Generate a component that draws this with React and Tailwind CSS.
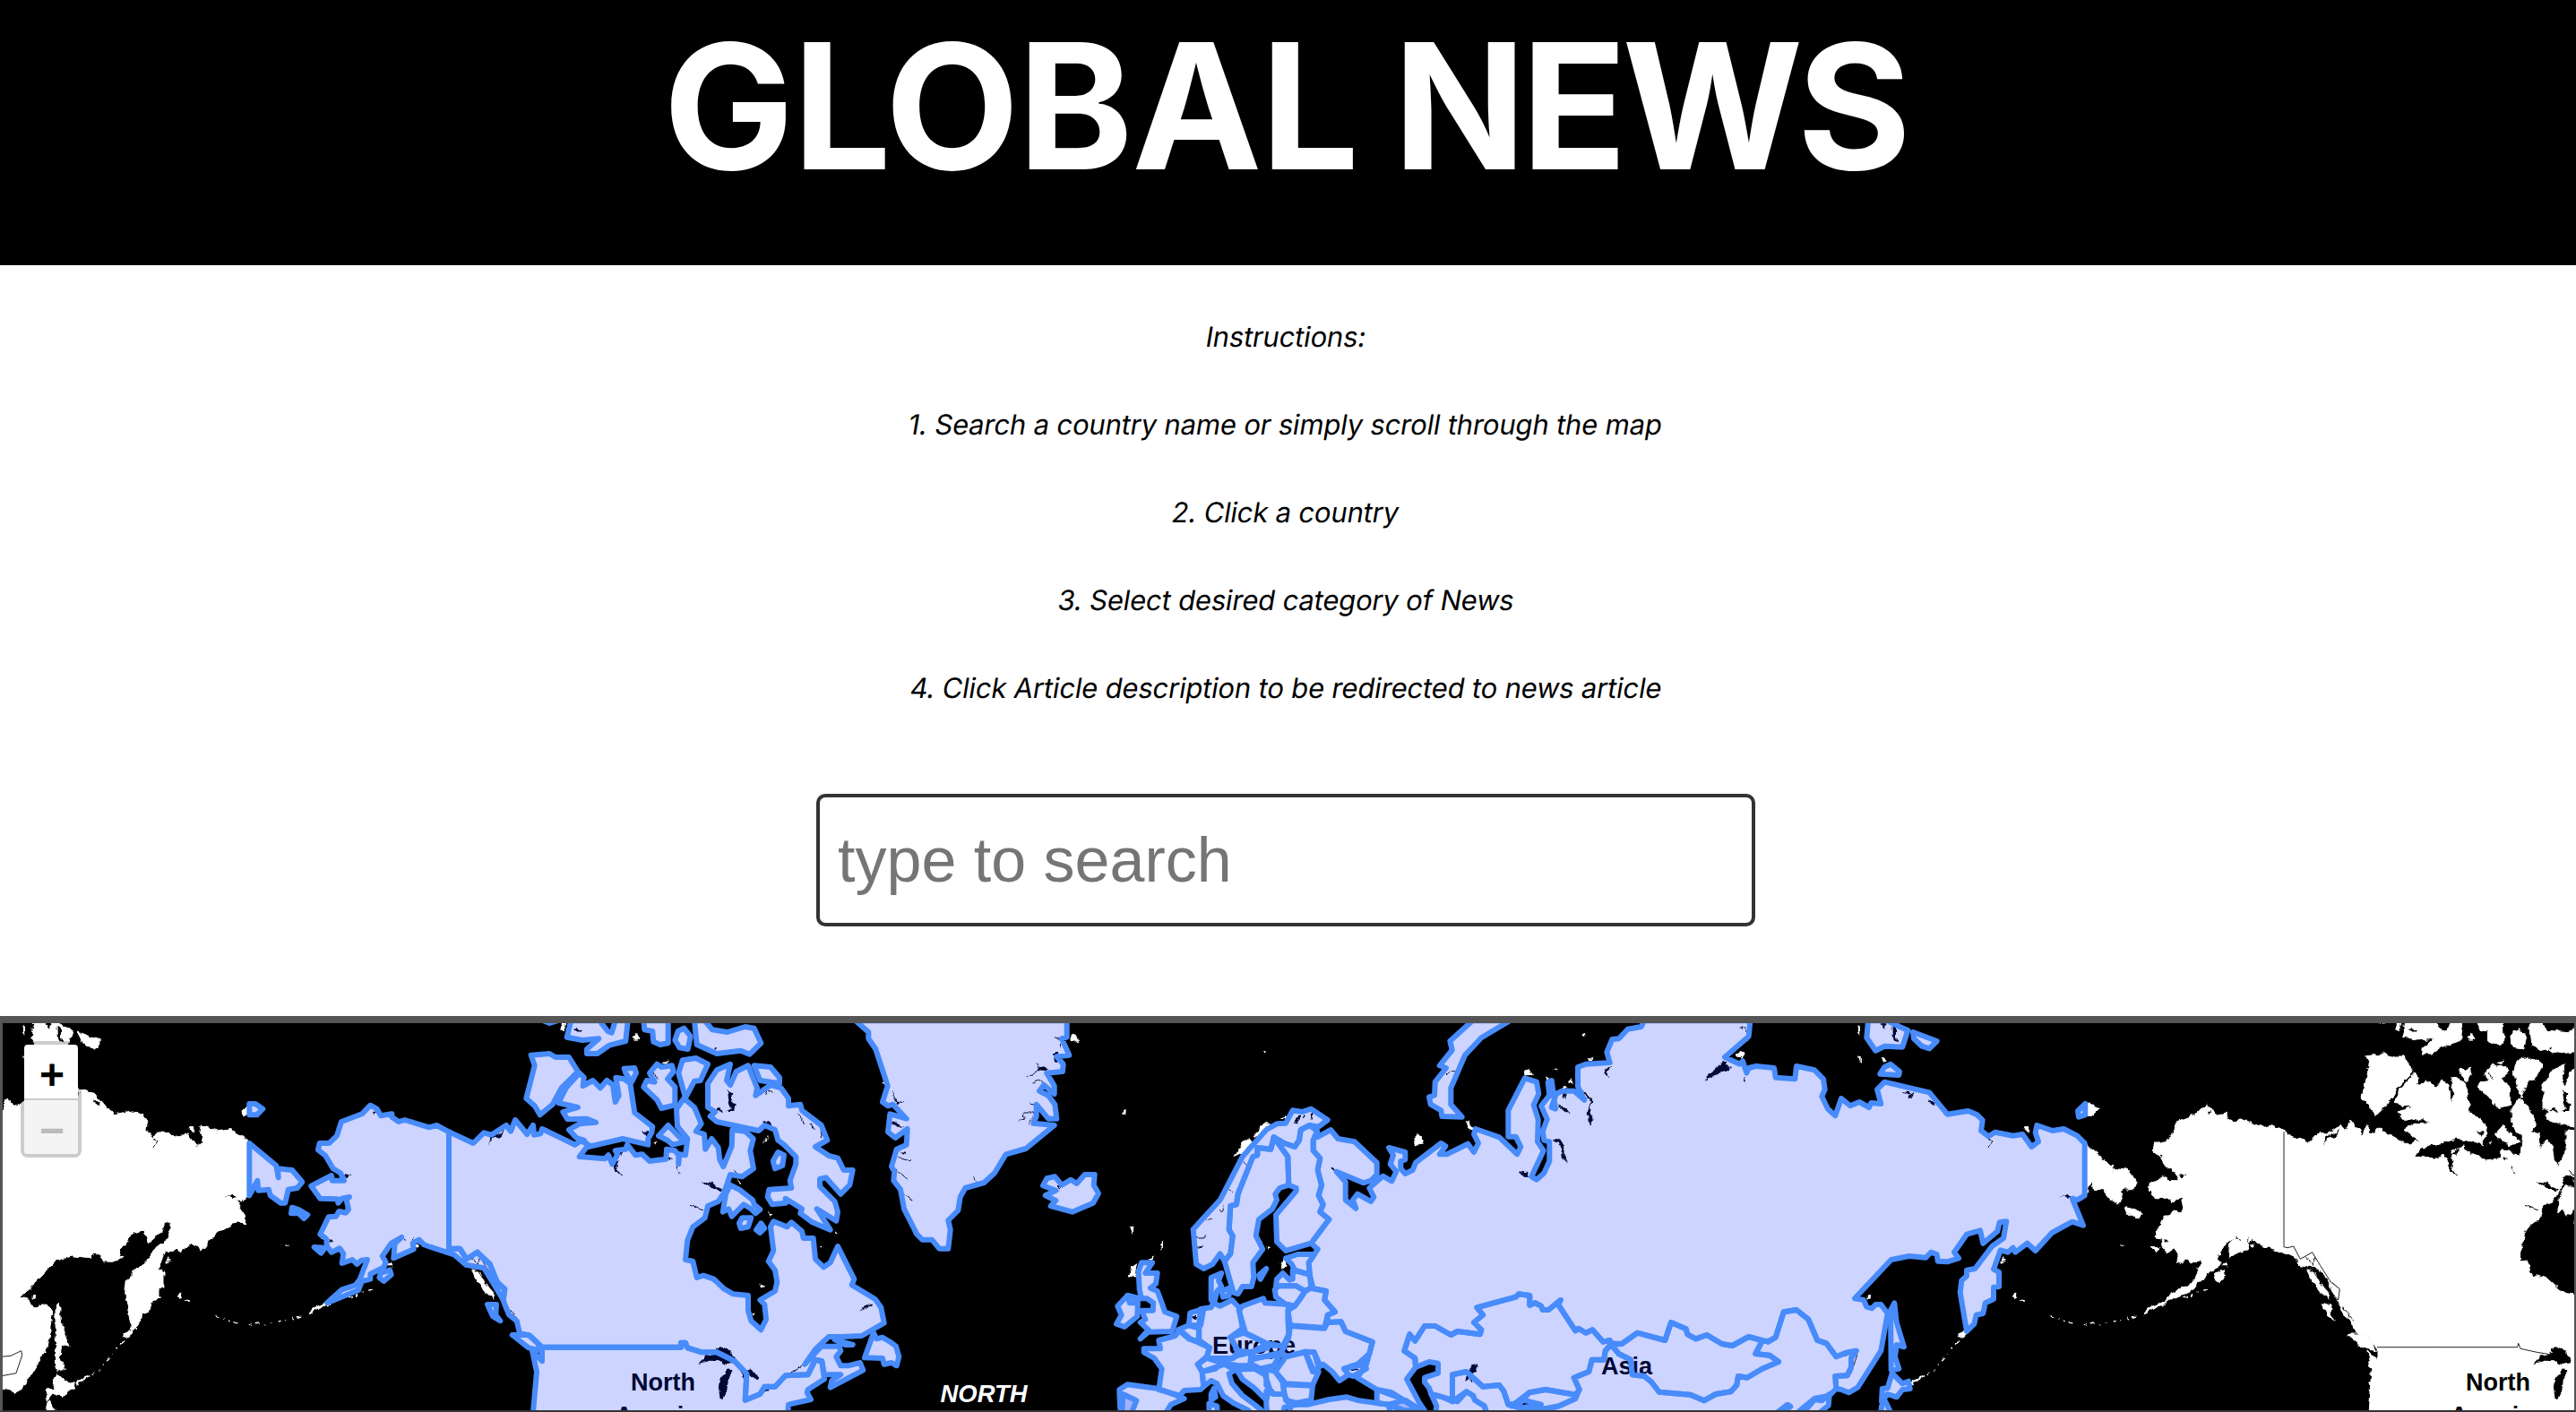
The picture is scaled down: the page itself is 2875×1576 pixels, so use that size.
import React from "react";

// Each trace is a list of [originX, "x,y x,y ..."] runs, stored at three units per pixel.
const pts = (...runs) =>
  runs
    .map(([ox, s]) =>
      s
        .trim()
        .split(/\s+/)
        .map((p) => {
          const [x, y] = p.split(",").map(Number);
          return (ox + x / 3).toFixed(1) + "," + (1126 + y / 3).toFixed(1);
        })
        .join(" ")
    )
    .join(" ");

const A = 0, B = 480, C = 940, D = 1200, E = 1540, F = 1960;

const finBorderUp = "790,785 850,705 820,680 830,655 815,625 825,590 812,540 820,500 797,475 797,440 810,410";
const rusKazWestward =
  "775,1120 770,1110 748,1115 712,1075 690,1085 665,1070 655,1078 597,990 605,975 565,1008 545,1008 540,995 520,985 502,992 502,960 465,955 455,965 325,1000 345,1025 315,1050 340,1075 335,1090 260,1080 238,1092 185,1062 150,1062 118,1112 100,1090 82,1145 118,1170 120,1200";
const usCanWestward =
  "1312,1180 1290,1175 1265,1225 1190,1228 1155,1265 1120,1265 1105,1290 1055,1310 1060,1222 1020,1180 960,1150 910,1150 862,1135 855,1118 840,1118 840,1133 375,1133";

const countries = [
  // Alaska
  pts([A, "1460,390 1437,397 1355,372 1335,378 1312,362 1312,352 1275,358 1262,335 1240,323 1212,352 1143,378 1128,425 1102,450 1070,450 1065,472 1090,492 1115,535 1140,550 1152,575 1112,575 1110,558 1042,593 1072,635 1130,637 1132,650 1145,635 1170,630 1160,640 1167,672 1158,683 1135,678 1125,695 1100,697 1072,755 1092,770 1095,795 1110,815 1137,802 1150,820 1145,852 1180,840 1195,855 1210,842 1230,840 1205,905 1190,925 1145,940 1095,985 1200,942 1212,912 1240,905 1240,888 1260,878 1285,865 1292,848 1280,828 1310,785 1345,765 1322,785 1318,835 1385,805 1382,785 1403,773 1420,790"], [B, "0,797 80,823 120,857 180,868 215,925 245,975 250,938 225,920 200,855 158,815 122,838 100,803 63,803 63,412 22,390"]),
  // Canada
  pts([B, "63,412 145,450 180,415 205,422 255,390 270,410 285,372 325,420 345,390 348,422 370,418 375,402 485,455 505,442 530,455 500,495 585,502 597,490 610,520 628,488 620,475 655,470 660,455 688,490 710,487 735,510 790,503 792,470 820,475 832,490 832,520 835,487 855,490 862,435 828,393 825,335 850,300 885,330 908,385 890,410 918,420 922,470 943,435 965,465 970,505 982,528 1010,460 1012,405 1055,410 1082,435 1072,475 1083,535 1045,562 1005,555 985,615 965,645 930,660 920,700 880,730 862,775 855,840 880,845 893,900 915,893 950,905 985,938 1015,955 1065,960 1065,1010 1075,1045 1108,1075 1125,1040 1120,990 1105,975 1155,945 1162,915 1155,875 1133,845 1150,810 1140,730 1150,712 1195,730 1210,715 1245,745 1250,768 1283,768 1290,838 1318,865 1340,850 1365,795 1420,905 1412,925"], [C, "110,972 130,1000 140,1052 65,1095 0,1098"], [B, "1335,1098 1290,1140 1255,1190 1310,1130 1370,1130 1375,1145 1360,1165 1375,1195 1400,1195 1440,1185 1450,1210 1340,1268 1345,1245 1375,1225 1320,1225"], [B, usCanWestward], [B, "335,1095 300,1085 290,1045 265,1025 250,990 245,975 250,938 225,915 200,855 158,815 122,838 100,803 63,803"]),
  // United States
  pts([B, usCanWestward], [B, "375,1180 342,1145 357,1215 345,1350 345,1400 1195,1400 1200,1325 1275,1308 1262,1285 1265,1275 1320,1240"]),
  // Arctic archipelago
  pts([B, "338,155 400,150 420,162 465,162 495,210 440,265 410,320 368,355 350,325 322,300 350,190"]),
  pts([B, "500,215 515,230 512,258 545,240 570,265 592,240 612,255 620,312 632,290 622,230 650,235 670,250 685,348 745,395 742,415 730,435 730,455 645,435 530,462 515,440 490,432 465,405 500,385 555,380 525,368 460,370 445,345 495,330 430,315 455,265"]),
  pts([B, "650,200 685,198 690,215 675,245 655,215"]),
  pts([B, "472,40 458,95 510,105 565,100 525,135 525,150 560,150 600,122 655,108 662,40 620,40 608,80 595,75 575,50 570,40"]),
  pts([B, "715,40 718,70 745,75 748,110 770,120 797,115 797,40"]),
  pts([B, "850,65 872,92 863,135 835,130 820,105 830,75"]),
  pts([B, "885,40 893,120 960,150 1040,140 1070,152 1108,115 1085,65 1055,60 995,78 945,70 920,40"]),
  pts([B, "380,40 400,48 425,40"]),
  pts([B, "760,185 775,195 810,190 815,210 795,235 820,262 820,322 775,333 760,305 715,262 725,240 752,245 735,215"]),
  pts([B, "845,172 890,165 930,185 905,240 885,242 855,298 832,215"]),
  pts([B, "797,390 835,430 855,445 812,455 795,440 765,425"]),
  pts([B, "1005,185 960,205 930,250 930,330 955,345 938,360 960,378 1100,408 1120,390 1155,405 1165,440 1185,455 1225,495 1225,520 1205,575 1210,600 1135,605 1130,630 1145,655 1190,650 1190,635 1245,670 1240,685 1280,715 1340,740 1295,670 1360,710 1365,680 1355,645 1305,595 1305,570 1325,565 1375,620 1405,590 1415,540 1385,540 1365,500 1335,492 1290,462 1330,440 1310,390 1245,340 1240,320 1200,325 1200,300 1175,265 1140,255 1090,290 1095,265 1065,190 1025,210 1005,255 993,240"]),
  pts([B, "1085,190 1140,195 1170,230 1170,250 1105,240"]),
  pts([B, "1005,590 1035,605 1080,640 1085,655 1105,672 1090,685 1075,670 1050,655 1030,675 1010,695 1000,670 980,680 990,620"]),
  pts([B, "1045,700 1075,700 1065,730 1040,735 1035,718"]),
  pts([B, "1108,718 1120,735 1105,750 1092,740"]),
  pts([B, "1165,480 1185,490 1180,525 1155,535 1148,510"]),
  pts([B, "275,1092 330,1092 360,1120 370,1145 330,1135"]),
  pts([B, "192,990 222,990 220,1025 235,1045 210,1030"]),
  pts([B, "1355,1108 1415,1125 1390,1125"]),
  pts([C, "105,1085 115,1105 135,1100 160,1115 180,1130 190,1165 182,1195 165,1185 140,1190 135,1170 75,1168"]),
  // Greenland, Iceland
  pts([C, "45,40 88,78 88,100 112,135 152,258 135,312 153,325 170,320 215,368 160,352 153,412 178,432 218,402 215,455 182,470 165,528 175,545 172,575 195,605 207,670 250,755 268,773 300,773 325,803 355,803 362,740 355,708 388,675 395,630 412,600 475,582 510,550 548,487 615,468 710,390 640,383 650,360 650,320 690,368 718,368 712,320 690,290 660,275 675,255 710,285 710,258 685,215 738,210 740,185 718,160 760,155 735,100 752,95 752,40"]),
  pts([C, "672,592 685,568 712,562 735,590 765,572 785,585 812,555 845,555 842,590 858,618 840,650 770,680 698,660 715,642 680,625 715,608"]),
  // British Isles
  pts([D, "222,850 258,850 235,885 275,885 270,920 252,935 275,945 290,985 300,1015 340,1030 325,1080 245,1082 218,1105 245,1075 218,1050 235,1040 222,1010 260,1010 262,985 240,970 222,970 215,940 212,880"]),
  pts([D, "175,960 210,970 208,1030 165,1065 138,1055 155,1025 142,995"]),
  pts([D, "175,960 182,985 208,985 210,968"]),
  // Scandinavia
  pts([D, "395,738 485,640 560,495 640,405 675,385 705,383 728,340 760,345 790,335 845,372 815,395 785,390 755,405 750,440 735,462 700,450 665,430 655,470 610,465 610,490 595,495 545,620 540,655 520,660 515,740 527,760 520,820 500,845 485,820 460,855 430,870 405,855"]),
  pts([D, "500,845 520,820 527,760 515,740 520,660 540,655 545,620 595,495 610,490 610,465 655,470 665,430 712,495 715,590 685,600 670,620 675,640 660,670 615,705 605,760 628,805 595,850 598,900 590,930 560,930 545,955 530,950"]),
  pts([D, "665,430 700,450 735,462 750,440 755,405 785,390"], [D, finBorderUp.split(" ").reverse().join(" ")], [D, "705,810 675,780 672,690 740,610 740,600 715,590 712,495"]),
  pts([D, "640,870 620,905 615,892"]),
  pts([D, "455,900 490,885 480,910 490,930 475,945 465,985 455,975"]),
  pts([D, "490,945 515,935 515,960 495,965"]),
  // Baltics and eastern Europe
  pts([D, "705,835 745,822 800,822 782,850 785,890 735,875 725,855"]),
  pts([D, "675,905 695,885 718,908 728,905 728,875 785,890 795,930 770,945 740,928 672,928"]),
  pts([D, "668,940 680,928 740,928 760,940 770,945 750,975 735,995 705,990 672,965"]),
  pts([D, "790,935 840,945 835,975 870,1015 845,1025 835,1068 720,1060 712,1010 735,995 750,975 770,945"]),
  pts([D, "560,995 630,970 635,985 715,990 712,1030 715,1090 695,1130 640,1120 570,1085 548,1010"]),
  pts([D, "420,1005 455,1000 462,985 485,995 525,975 548,1000 560,1070 520,1100 545,1145 530,1170 440,1170 450,1135 415,1110 415,1060"]),
  pts([D, "385,1018 430,1005 420,1060 380,1060"]),
  pts([D, "345,1075 380,1060 415,1070 412,1115 380,1105"]),
  pts([D, "350,1075 385,1105 450,1135 440,1165 410,1190 425,1215 430,1265 420,1275 365,1278 350,1295 280,1275 290,1205 265,1170 230,1150 230,1138 285,1138 280,1110 335,1095"]),
  pts([D, "148,1275 175,1258 280,1272 365,1305 320,1325 305,1350 280,1400 160,1400 150,1330"]),
  pts([D, "160,1290 205,1312 190,1350 185,1390 155,1390"]),
  pts([D, "410,1190 440,1170 490,1185 470,1205 425,1215"]),
  pts([D, "425,1215 500,1190 535,1210 515,1222 525,1255 560,1295 600,1325 625,1345 610,1380 580,1345 530,1320 495,1295 475,1255 455,1245 430,1265"]),
  pts([D, "490,1185 545,1160 590,1150 585,1195 545,1195"]),
  pts([D, "520,1100 565,1085 620,1110 645,1135 590,1150 545,1145"]),
  pts([D, "640,1125 700,1130 685,1160 600,1168 590,1150"]),
  pts([D, "590,1175 690,1150 665,1195 620,1205 590,1190"]),
  pts([D, "705,1165 770,1150 795,1215 815,1215 795,1260 705,1255 670,1215"]),
  pts([D, "770,1148 800,1150 820,1195 800,1215"]),
  pts([D, "695,1258 795,1262 790,1310 740,1320 705,1310"]),
  pts([D, "640,1205 670,1215 695,1250 700,1290 665,1290 640,1260"]),
  pts([D, "540,1208 600,1205 635,1225 650,1270 640,1310 600,1270 560,1240"]),
  pts([D, "640,1280 665,1290 700,1290 710,1315 740,1325 700,1335 690,1390 650,1390 640,1330"]),
  pts([D, "465,1270 470,1300 455,1310 455,1290"]),
  pts([D, "448,1322 475,1330 478,1400 450,1400"]),
  pts([D, "720,1325 780,1325 850,1308 910,1300 950,1312 1010,1320 1050,1325 1100,1345 1120,1400 720,1400"]),
  pts([D, "1010,1275 1060,1285 1130,1330 1150,1345 1100,1345 1050,1325 1010,1320"]),
  pts([D, "1050,1325 1105,1310 1160,1345 1150,1400 1060,1400"]),
  pts([D, "720,1062 835,1070 845,1050 890,1048 905,1080 995,1115 985,1155 945,1190 900,1205 915,1225 885,1245 860,1215 830,1190 815,1200 800,1150 770,1148 705,1165 690,1150 715,1100"]),
  pts([D, "900,1205 970,1190 975,1205 930,1230 915,1225"]),
  // Russia
  pts([D, "810,430 855,405 880,435 935,445 1010,515 1010,555 990,575 965,583 875,545 905,580 905,640 940,668 930,640 945,620 990,645 1000,630 985,600 1030,560 1060,577 1075,545 1055,520 1065,490 1050,465 1105,480 1105,505 1090,510 1090,535 1105,552 1130,540 1140,515 1225,450 1240,460 1220,487 1245,487 1315,452 1335,480 1350,450 1335,420 1340,402 1420,430"], [E, "460,487 472,462 455,428 430,428 430,340 485,232 525,245 532,285 515,322 530,370 528,445 548,475 508,562 525,572 550,550 568,510 568,445 550,440 545,410 560,370 540,325 568,290 563,245 575,240 588,335 575,330 590,285 610,275 650,275 685,305 663,260 663,195 690,185 770,180 760,145 778,102 800,100 830,68 875,60 885,40 1240,40 1235,92 1155,162 1205,185 1215,175 1228,215 1235,198 1260,192 1320,198 1325,230 1390,235 1395,192"], [F, "195,205 225,235 230,270 220,293 240,335 265,358 285,300 315,325 345,312 378,330 385,315 418,318 405,270 430,245 580,280 640,353 710,342 740,355 758,373 753,408 778,427 800,413 860,425 892,420 922,462 945,445 935,415 940,390 992,408 1030,402 1075,425 1100,450 1100,625 1075,640 1058,635 1095,725 1058,713 990,750 935,810 908,785 868,815 860,800 842,815 818,808 795,872 813,882 813,930 795,932 795,972 767,985 760,1020 737,1025 730,1055 705,1080 683,950 688,910 705,895 705,875 733,870 790,795 828,768 838,712 815,715 808,745 760,785 750,742 705,755 663,815 678,835 640,847 608,845 605,822 585,815 568,833 512,828 452,840 330,970 360,975 370,998 388,1003 400,990 418,990 440,1020 418,1145 340,1268 310,1285 285,1275 268,1272 265,1230 305,1228 318,1200 318,1170 335,1145 300,1152 268,1165 235,1120 205,1110 175,1040 135,1008 92,1015 65,1100 40,1115"], [E, "1235,1098 1180,1128 1145,1122 1095,1092 1058,1105 1030,1090 1025,1072 975,1050 955,1110 862,1085 810,1122"], [E, rusKazWestward], [E, "90,1240 130,1315 150,1345"], [D, "1130,1330 1080,1300 1010,1275 945,1235 975,1190 985,1155 995,1115 905,1080 890,1048 845,1050 845,1025 870,1015 835,975 840,945 790,935 785,890 782,850 812,805"], [D, finBorderUp]),
  pts([E, "310,40 235,108 242,138 200,190 222,198 185,245 183,290 165,295 170,320 205,340 208,360 275,362 238,320 238,265 285,155 340,97 435,40"]),
  pts([F, "375,40 370,97 400,140 430,125 490,128 508,72 480,60 440,40"]),
  pts([F, "525,78 605,108 580,133 555,125 528,100"]),
  pts([F, "450,185 480,210 478,222 415,218 430,195"]),
  pts([F, "1102,318 1102,355 1080,362 1077,342"]),
  pts([F, "463,985 470,1050 495,1132 470,1125 465,1165 478,1205 452,1210 450,1010"]),
  pts([F, "455,1220 490,1255 510,1247 515,1272 490,1275 470,1300 440,1290 420,1315 422,1272 440,1270"]),
  pts([F, "430,1310 450,1350 440,1400 415,1400 420,1330"]),
  // Central and east Asia
  pts([E, rusKazWestward], [E, "165,1182 195,1187 195,1220 150,1235 150,1250 165,1270 172,1290 210,1300 243,1315 243,1225 290,1215 345,1265 400,1260 415,1280 430,1325 470,1320 500,1285 555,1275 655,1292 668,1275 650,1235 700,1215 710,1175 750,1175 755,1145"]),
  pts([E, "243,1315 243,1225 290,1215 345,1265 400,1260 415,1280 430,1325 480,1340 470,1400 370,1400 350,1330 318,1310 312,1295 290,1282"]),
  pts([E, "172,1290 210,1300 260,1315 290,1282 312,1295 318,1310 350,1330 375,1400 180,1400 190,1330"]),
  pts([E, "440,1330 500,1285 555,1275 655,1292 655,1305 600,1330 545,1345 480,1335 540,1325 480,1310"]),
  pts([E, "480,1335 545,1340 600,1330 655,1305 668,1275 650,1235 700,1215 710,1175 750,1175 755,1145 775,1125 800,1155 840,1175 845,1225 885,1230 910,1250 935,1283 1040,1292 1085,1312 1125,1290 1175,1282 1195,1260 1200,1230 1230,1235 1280,1205 1335,1182 1305,1160 1258,1155 1280,1112 1300,1112"], [F, "40,1115 65,1100 92,1015 135,1008 175,1040 205,1110 235,1120 268,1165 300,1152 335,1145 318,1170 318,1200 305,1228 265,1230 268,1272 245,1295 195,1305 140,1350 90,1390 70,1365 115,1332 105,1325 60,1360 20,1400"], [E, "480,1400"]),
  pts([E, "775,1125 810,1122 862,1085 955,1110 975,1050 1025,1072 1030,1090 1058,1105 1095,1092 1145,1122 1180,1128 1235,1098 1280,1112 1258,1155 1305,1160 1335,1182 1280,1205 1230,1235 1200,1230 1195,1260 1175,1282 1125,1290 1085,1312 1040,1292 935,1283 910,1250 885,1230 845,1225 840,1175 800,1155"]),
  pts([F, "195,1308 220,1312 245,1290 242,1328 215,1350 200,1400 120,1400"]),
  // Bering Sea side
  pts([A, "835,318 855,318 880,335 860,355 835,355"]),
  pts([A, "835,450 925,525 932,565 930,535 978,540 1012,580 995,600 965,605 955,650 940,650 905,625 900,605 865,608 862,575 835,625"]),
  pts([A, "978,665 1000,672 1030,690 1018,702 1000,685 975,685"]),
  pts([A, "1275,885 1305,875 1310,890 1285,912 1270,900"]),
  pts([A, "1052,798 1088,800 1075,818"]),
];

// Coastal dots and slivers of land drawn on the base tiles only.
const islets = [
  pts([B, "432,68 445,50 460,50 450,75"]),
  pts([B, "680,90 690,83 698,97 688,108 680,100"]),
  pts([B, "775,182 800,168 795,185"]),
  pts([B, "138,872 170,885 195,930 215,950 208,975 190,950 170,925 150,900"]),
  pts([B, "1115,450 1130,425 1125,440"]),
  pts([B, "1025,575 1045,590 1035,592"]),
  pts([B, "1105,920 1125,925 1112,938"]),
  pts([B, "1075,1018 1088,1022 1083,1030"]),
  pts([B, "1130,682 1145,685 1138,692"]),
  pts([B, "1355,742 1365,750 1358,755"]),
  pts([B, "1302,788 1310,792 1305,798"]),
  pts([B, "750,445 760,440 758,455"]),
  pts([C, "765,92 780,85 792,105 772,112"]),
  pts([C, "1410,145 1418,143 1416,152"]),
  pts([C, "935,350 952,338 953,345 940,354"]),
  pts([C, "130,250 142,246 145,262"]),
  pts([C, "962,730 980,728 972,752"]),
  pts([C, "1062,790 1075,778 1068,808"]),
  pts([C, "1030,832 1048,830 1036,842"]),
  pts([C, "962,895 970,865 985,855 978,880 988,900"]),
  pts([C, "1308,497 1340,450 1362,430 1375,445 1345,480 1325,488"]),
  pts([C, "1375,430 1410,385 1435,385 1400,425"]),
  pts([C, "1465,365 1485,358 1490,368"]),
  pts([C, "1463,855 1480,840 1490,862 1470,870"]),
  pts([C, "1423,795 1434,798 1428,806"]),
  pts([E, "112,435 125,420 145,437 140,455 120,458 112,450"]),
  pts([E, "287,375 300,378 318,408 298,400"]),
  pts([E, "483,210 500,205 510,222 485,228"]),
  pts([E, "632,240 640,232 648,248 636,250"]),
  pts([E, "572,208 588,202 598,208 588,206"]),
  pts([E, "695,166 712,166 710,171 698,171"]),
  pts([E, "680,82 690,78 691,90 683,93"]),
  pts([E, "600,268 618,258 628,268"]),
  pts([E, "555,230 567,232 560,240"]),
  pts([E, "1190,155 1205,142 1222,152 1215,165 1200,165"]),
  pts([F, "340,60 350,58 352,80 343,85"]),
  pts([F, "338,160 345,162 354,180 348,178"]),
  pts([F, "420,162 432,157 438,175 425,180"]),
  pts([F, "895,402 908,396 920,408 908,415"]),
  pts([F, "1100,315 1130,320 1142,335 1130,345 1100,345"]),
  pts([F, "818,852 830,835 840,842"]),
  pts([F, "370,962 382,960 385,972 375,970"]),
  pts([A, "1290,862 1310,850 1315,862"]),
  pts([A, "1388,790 1408,790 1398,805"]),
];

const arcs = [
  pts([A, "1100,985 1065,1000 1030,1025"]),
  pts([F, "705,1080 680,1102"]),
  pts([F, "560,1230 520,1255"]),
  pts([A, "600,955 608,970"]),
];
const dashedArcs = [
  pts([A, "1010,1030 940,1048 900,1055 865,1057 825,1062 795,1052 735,1035 712,1025"]),
  pts([A, "625,972 635,977"]),
  pts([A, "955,788 968,793"]),
  pts([F, "675,1112 635,1165 600,1205 560,1230 520,1258"]),
  pts([A, "1165,965 1190,960 1252,940"]),
];

// Inland water and fjords.
const lakes = [
  pts([B, "898,1188 920,1165 960,1150 955,1138 975,1132 1000,1140 1022,1165 1020,1185 990,1192 970,1180 935,1178"]),
  pts([B, "970,1280 975,1235 990,1212 1018,1208 1000,1235 992,1290 985,1308 974,1305"]),
  pts([B, "1040,1210 1070,1205 1090,1220 1105,1240 1085,1238 1068,1225 1070,1250 1055,1245"]),
  pts([B, "1105,1290 1155,1265 1120,1262"]),
  pts([B, "910,580 940,585 985,605 970,610 945,602"]),
  pts([B, "995,270 1012,285 1008,305 1022,315 1018,345 990,345 1010,335 1000,310"]),
  pts([B, "1115,370 1140,385 1150,405 1125,395"]),
  pts([B, "955,345 968,330 978,347"]),
  pts([B, "605,480 630,510 628,535 638,560 622,545 615,515"]),
  pts([B, "628,485 650,470 655,478 640,488"]),
  pts([B, "195,455 205,430 250,405 235,425 215,432"]),
  pts([B, "800,495 810,500 805,508 798,505"]),
  pts([B, "1440,1012 1460,995 1485,985 1465,1002"]),
  pts([B, "480,68 505,65 495,75"]),
  pts([B, "708,412 730,408 722,425"]),
  pts([B, "945,130 960,125 955,138"]),
  pts([C, "660,205 672,192 685,208"]),
  pts([C, "708,150 720,145 720,175 710,172"]),
  pts([C, "165,380 180,380 205,400 185,395"]),
  pts([C, "172,305 190,315 182,322"]),
  pts([C, "190,480 212,482 210,488"]),
  pts([C, "722,592 732,598 725,606"]),
  pts([C, "1175,1035 1190,1025 1185,1042"]),
  pts([D, "735,385 745,355 755,358 742,385"]),
  pts([D, "763,370 770,353 775,358"]),
  pts([D, "788,355 797,352 793,375"]),
  pts([D, "855,530 870,535 872,548"]),
  pts([D, "1330,1195 1350,1190 1340,1215 1325,1222 1330,1250 1318,1235 1302,1245 1310,1230"]),
  pts([D, "915,1205 945,1200 945,1212 925,1215"]),
  pts([E, "1087,247 1105,215 1125,200 1148,175 1165,178 1160,190 1180,190 1165,207 1120,220 1098,235"]),
  pts([E, "680,275 695,285 715,310 705,345 717,375 705,392 695,350 708,315"]),
  pts([E, "575,437 598,435 615,455 618,495 632,512 612,508 610,480 598,450"]),
  pts([E, "752,205 780,188 762,210 768,226 756,218"]),
  pts([E, "595,325 622,332 635,348 620,345"]),
  pts([E, "610,288 622,288 624,298 612,300"]),
  pts([E, "470,547 492,545 498,562 480,556"]),
  pts([F, "490,275 510,280 520,290 535,280 520,305 505,303 515,292"]),
  pts([F, "572,308 590,305 602,315 598,328"]),
  pts([F, "1010,632 1045,620 1055,630 1042,635 1030,628"]),
  pts([F, "455,65 465,63 465,90 480,112 465,108 455,90"]),
  pts([F, "415,50 433,50 433,68"]),
  pts([A, "1150,555 1175,558 1162,565"]),
  pts([A, "1245,345 1258,342 1250,355"]),
  pts([A, "1098,775 1118,778 1105,785"]),
];

const creeks = [
  pts([B, "870,658 915,675"]), pts([B, "1018,538 1040,560"]), pts([B, "828,530 838,550"]),
  pts([B, "1235,350 1250,385"]), pts([B, "1275,385 1285,405"]), pts([B, "1305,410 1310,430"]),
  pts([B, "750,215 760,235"]), pts([B, "1120,290 1130,270 1145,280"]), pts([B, "135,830 165,860 160,835"]),
  pts([B, "260,995 285,1030 300,1045"]), pts([B, "1205,1220 1260,1185"]),
  pts([C, "620,228 640,218 665,205 655,185"]), pts([C, "637,250 665,238 670,248"]), pts([C, "625,315 650,320"]),
  pts([C, "595,373 610,370 607,348 640,348 630,385"]), pts([C, "170,275 180,310 205,315"]),
  pts([C, "180,540 215,570"]), pts([C, "190,500 225,510"]), pts([C, "210,620 235,640"]), pts([C, "440,565 450,590"]),
  pts([C, "712,100 735,110 732,130"]),
  pts([D, "405,765 435,765"]), pts([D, "405,800 425,795"]), pts([D, "480,670 495,680 502,658"]),
  pts([D, "435,705 455,700"]), pts([D, "560,510 575,525"]), pts([D, "510,605 525,612"]),
  pts([E, "222,215 240,210 268,217"]), pts([E, "1225,225 1222,250"]), pts([E, "1210,55 1225,75"]),
  pts([F, "780,430 785,450 776,467"]), pts([A, "1345,760 1350,770 1362,775"]), pts([A, "1380,768 1385,785"]),
];

const borders = [
  pts([B, "63,412 63,797 75,800 95,795 118,838 158,815 185,860 220,915 250,938 245,975 230,960"]),
  pts([B, "375,1133 845,1133 848,1120 855,1138 910,1150 960,1158"]),
  pts([F, "268,1165 300,1162 335,1145 338,1160 318,1220 265,1230 268,1272"]),
  pts([B, "150,860 175,900 200,930 220,960"]),
];

function Poly({ items }) {
  return items.map((p, i) => <polygon key={i} points={p} />);
}
function Lines({ items }) {
  return items.map((p, i) => <polyline key={i} points={p} />);
}

function Tile() {
  return (
    <>
      <g filter="url(#coast)">
        <g fill="#fff" stroke="#fff" strokeWidth="1"><Poly items={countries} /></g>
        <g fill="#fff"><Poly items={islets} /></g>
        <g fill="none" stroke="#fff" strokeWidth="3"><Lines items={arcs} /></g>
        <g fill="none" stroke="#fff" strokeWidth="1.4" strokeDasharray="5 4 2 7 1 5"><Lines items={dashedArcs} /></g>
        <g fill="#000"><Poly items={lakes} /></g>
        <g fill="none" stroke="#000" strokeWidth="1"><Lines items={creeks} /></g>
      </g>
      <g fill="none" stroke="#222" strokeWidth="1"><Lines items={borders} /></g>
      <g fontFamily="Liberation Sans, Arial, sans-serif" fontWeight="700" fontSize="27" textAnchor="middle" fill="#000">
        <text x="740" y="1551.5">North</text>
        <text x="740" y="1589">America</text>
        <text x="1399.5" y="1511">Europe</text>
        <text x="1815.5" y="1533.5">Asia</text>
        <text x="1098" y="1565" fill="#fff" fontSize="27.4" fontStyle="italic">NORTH</text>
      </g>
    </>
  );
}

function WorldMap() {
  return (
    <svg className="block h-full w-full" viewBox="3 1142 2870 432" preserveAspectRatio="xMinYMin slice">
      <defs>
        <filter id="coast" filterUnits="userSpaceOnUse" x="-100" y="1120" width="2600" height="480" colorInterpolationFilters="sRGB">
          <feTurbulence type="fractalNoise" baseFrequency="0.11" numOctaves="3" seed="4" />
          <feDisplacementMap in="SourceGraphic" scale="7" xChannelSelector="R" yChannelSelector="G" />
        </filter>
        <g id="tile"><Tile /></g>
      </defs>
      <rect x="0" y="1126" width="2875" height="460" fill="#000" />
      <use href="#tile" x="-2048" />
      <use href="#tile" x="2048" />
      <use href="#tile" />
      <g fill="#0028ff" fillOpacity="0.2"><Poly items={countries} /></g>
      <g fill="none" stroke="#488bfa" strokeWidth="6" strokeLinejoin="round" strokeLinecap="round"><Poly items={countries} /></g>
    </svg>
  );
}

const steps = [
  "Instructions:",
  "1. Search a country name or simply scroll through the map",
  "2. Click a country",
  "3. Select desired category of News",
  "4. Click Article description to be redirected to news article",
];

export default function App() {
  return (
    <div className="flex h-[1576px] w-[2875px] flex-col overflow-hidden bg-white font-['Inter',sans-serif] text-black">
      <header className="flex h-[296px] shrink-0 justify-center bg-black pr-[7px]">
        <h1 className="whitespace-nowrap text-[194.5px] leading-[237px] font-bold tracking-[-1.5px] text-white">
          GLOBAL <span className="-ml-[5px] tracking-[-5.4px]">NEWS</span>
        </h1>
      </header>
      <section className="flex h-[590px] shrink-0 flex-col items-center pt-[61px] pr-[5px]">
        {steps.map((s) => (
          <p key={s} className="h-[98px] text-[31px] leading-[38px] tracking-[-0.17px] whitespace-nowrap">
            <span className="inline-block -skew-x-[9.5deg]">{s}</span>
          </p>
        ))}
      </section>
      <div className="flex h-[248px] shrink-0 items-start justify-center pr-[5px]">
        <input
          className="h-[148px] w-[1048px] rounded-[10px] border-4 border-[#333] px-5 font-['Liberation_Sans',Arial,sans-serif] text-[70px] outline-none placeholder:text-[#757575] placeholder:opacity-100"
          placeholder="type to search"
        />
      </div>
      <main className="relative h-[442px] shrink-0 border-t-8 border-r-2 border-b-2 border-l-[3px] border-t-[#555] border-r-[#555] border-b-[#333] border-l-[#555] bg-black">
        <WorldMap />
        <div className="absolute top-5 left-5 flex flex-col rounded-lg border-4 border-black/20 bg-clip-padding font-['Liberation_Sans',Arial,sans-serif] text-[48px] font-bold">
          <button className="flex h-[62px] w-[60px] items-center justify-center rounded-t border-b-2 border-[#ccc] bg-white pt-2 pl-0.5 leading-none text-black">+</button>
          <button className="flex h-[60px] w-[60px] items-center justify-center rounded-b bg-[#f4f4f4] pt-2 pl-0.5 leading-none text-[#bbb]">−</button>
        </div>
      </main>
    </div>
  );
}
